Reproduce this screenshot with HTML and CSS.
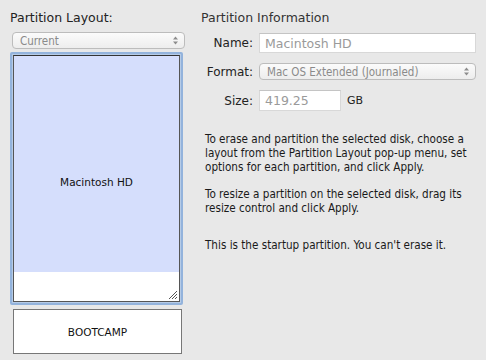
FILE: index.html
```html
<!DOCTYPE html>
<html lang="en">
<head>
  <meta charset="UTF-8">
  <title>Partition</title>
  <link rel="stylesheet" href="styles.css">
</head>
<body>
  <div class="window">
    <div class="layout-pane">
      <h2 class="pane-title">Partition Layout:</h2>
      <div class="popup layout-popup">
        <span>Current</span>
        <svg class="arrows" width="5" height="9" viewBox="0 0 5 9">
          <path d="M0 3.5 L2.5 0.5 L5 3.5 Z M0 5.5 L2.5 8.5 L5 5.5 Z" fill="#8c8c8c"/>
        </svg>
      </div>
      <div class="map">
        <div class="map-inner">
          <div class="part selected">Macintosh HD</div>
          <div class="free">
            <svg class="grip" width="10" height="10" viewBox="0 0 10 10">
              <path d="M9 1 L1 9 M9 4 L4 9 M9 7 L7 9" stroke="#555" stroke-width="1"/>
            </svg>
          </div>
        </div>
      </div>
      <div class="part bootcamp">BOOTCAMP</div>
    </div>

    <div class="info-pane">
      <h2 class="pane-title info-title">Partition Information</h2>
      <div class="form">
        <label>Name:</label>
        <div class="field wide">Macintosh HD</div>
        <label>Format:</label>
        <div class="popup wide">
          <span>Mac OS Extended (Journaled)</span>
          <svg class="arrows" width="5" height="9" viewBox="0 0 5 9">
            <path d="M0 3.5 L2.5 0.5 L5 3.5 Z M0 5.5 L2.5 8.5 L5 5.5 Z" fill="#8c8c8c"/>
          </svg>
        </div>
        <label>Size:</label>
        <div class="size-row">
          <div class="field short">419.25</div>
          <span class="unit">GB</span>
        </div>
      </div>
      <div class="help">
        <p>To erase and partition the selected disk, choose a<br>layout from the Partition Layout pop-up menu, set<br>options for each partition, and click Apply.</p>
        <p>To resize a partition on the selected disk, drag its<br>resize control and click Apply.</p>
        <p class="startup">This is the startup partition. You can't erase it.</p>
      </div>
    </div>
  </div>
</body>
</html>
```

FILE: styles.css
```css
body {
  margin: 0;
  background-color: #e8e8e8;
  font-family: 'DejaVu Sans', 'Liberation Sans', sans-serif;
  color: #222;
}

.window {
  display: flex;
  width: 486px;
  height: 360px;
  overflow: hidden;
}

.layout-pane {
  width: 174px;
  padding: 9px 0 0 10px;
}

.pane-title {
  margin: 0;
  font-size: 12.5px;
  font-weight: normal;
  color: #222;
  line-height: 17px;
}

.popup {
  display: flex;
  justify-content: space-between;
  align-items: center;
  box-sizing: border-box;
  height: 17px;
  padding: 0 6px 0 7px;
  background: linear-gradient(#fbfbfb, #ededed);
  border: 1px solid #bcbcbc;
  border-radius: 4px;
  font-family: 'DejaVu Sans Condensed', 'DejaVu Sans', sans-serif;
  font-size: 11.5px;
  color: #8a8a8a;
}

.arrows {
  display: block;
  flex-shrink: 0;
}

.layout-popup {
  width: 173px;
  margin: 6px 0 0 2px;
}

.map {
  width: 173px;
  height: 253px;
  margin-top: 3px;
  box-sizing: border-box;
  border: 2px solid #93b3dc;
  border-radius: 2px;
  padding: 1px;
  background: #b6cbe6;
}

.map-inner {
  height: 100%;
  display: flex;
  flex-direction: column;
  border: 1px solid #555;
  border-top-color: #333;
  box-sizing: border-box;
}

.part {
  display: flex;
  align-items: center;
  justify-content: center;
  font-size: 10.5px;
  color: #111;
}

.selected {
  height: 216px;
  box-sizing: border-box;
  padding-top: 36px;
  background: #d5defc;
}

.free {
  flex: 1;
  background: #fff;
  display: flex;
  justify-content: flex-end;
  align-items: flex-end;
}

.grip {
  display: block;
  margin: 0 1px 1px 0;
}

.bootcamp {
  width: 169px;
  height: 45px;
  margin: 4px 0 0 3px;
  box-sizing: border-box;
  background: #fff;
  border: 1px solid #777;
}

.info-pane {
  flex: 1;
  padding: 9px 0 0 17px;
}

.info-title {
  color: #333;
}

.form {
  display: grid;
  grid-template-columns: 52px 1fr;
  column-gap: 6px;
  row-gap: 10px;
  align-items: center;
  margin-top: 7px;
  font-size: 12px;
}

.form label {
  justify-self: end;
  color: #222;
  white-space: nowrap;
}

.field {
  box-sizing: border-box;
  background: #fff;
  border: 1px solid #d8d8d8;
  border-top-color: #c4c4c4;
  padding: 0 0 0 5px;
  font-size: 12.5px;
  color: #9a9a9a;
  display: flex;
  align-items: center;
}

.wide {
  width: 217px;
}

.form .field.wide {
  height: 20px;
}

.form .popup.wide {
  height: 17px;
}

.size-row {
  display: flex;
  align-items: center;
}

.short {
  width: 82px;
  height: 21px;
}

.unit {
  margin-left: 6px;
  font-size: 11px;
  color: #222;
}

.help {
  margin: 21px 0 0 4px;
  font-family: 'DejaVu Sans Condensed', 'DejaVu Sans', sans-serif;
  font-size: 11.6px;
  line-height: 14px;
  color: #1a1a1a;
}

.help p {
  margin: 0 0 13px;
}

.help .startup {
  margin-top: 23px;
}
```
